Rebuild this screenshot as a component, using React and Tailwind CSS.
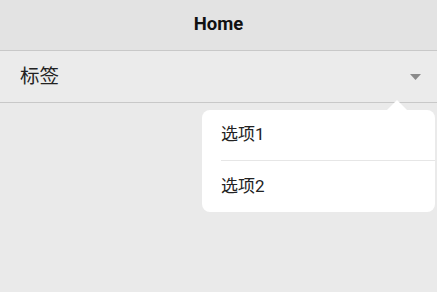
import React from 'react';

const font = { fontFamily: 'Roboto, "Noto Sans CJK SC", sans-serif' };

const options = ['选项1', '选项2'];

const App = () => {
  return (
    <div className="flex h-[292px] w-[437px] flex-col overflow-hidden bg-[#eaeaea] text-[#1a1a1a]" style={font}>
      {/* Nav bar */}
      <div className="flex h-[51px] shrink-0 items-center justify-center border-b border-[#c8c8c8] bg-[#e3e3e3]">
        <span className="text-[18.5px] font-bold text-[#111]">Home</span>
      </div>

      {/* Picker row */}
      <div className="flex h-[52px] shrink-0 items-center justify-between border-b border-[#c8c8c8] bg-[#ebebeb] pl-[20px] pr-[16px]">
        <span className="text-[19.5px] text-[#222]">标签</span>
        <svg width="11" height="6" viewBox="0 0 11 6">
          <path d="M0 0 H11 L5.5 6 Z" fill="#8a8a8a" />
        </svg>
      </div>

      {/* Content */}
      <div className="relative flex-1">
        <div className="absolute left-[202px] top-[7px] w-[233px] rounded-[8px] bg-white">
          <div className="absolute -top-[10px] right-[28px] h-0 w-0 border-x-[10px] border-b-[10px] border-x-transparent border-b-white" />
          {options.map((o, i) => (
            <div key={o} className="pl-[19px]">
              <div className={`flex h-[51px] items-center text-[17px] text-[#222] ${i === 0 ? 'border-b border-[#e6e6e6]' : ''}`}>
                {o}
              </div>
            </div>
          ))}
        </div>
      </div>
    </div>
  );
};

export default App;
